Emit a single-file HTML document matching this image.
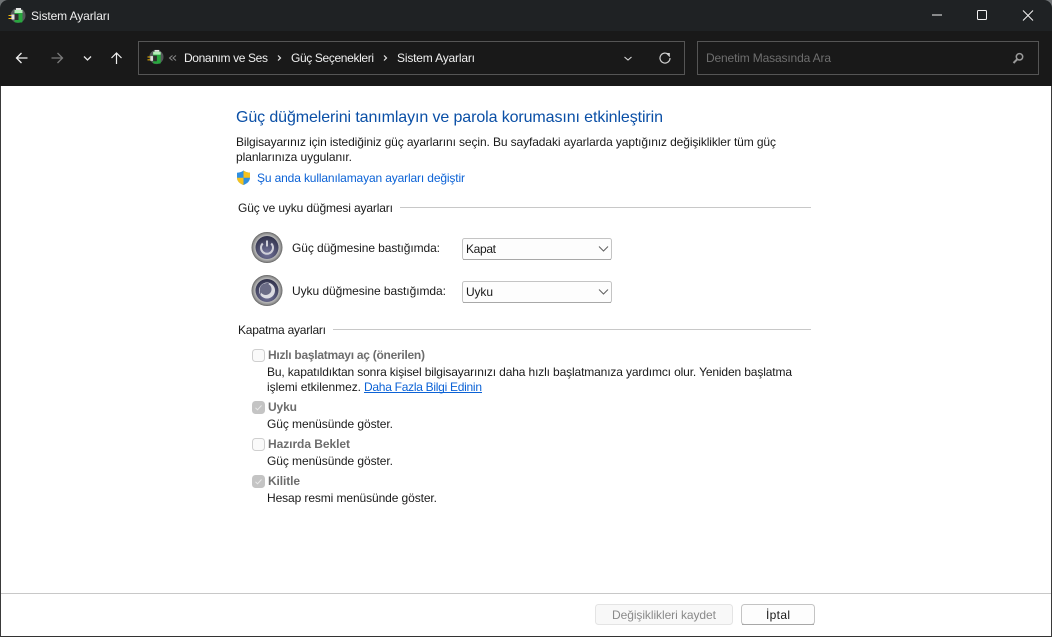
<!DOCTYPE html>
<html><head><meta charset="utf-8"><title>Sistem Ayarları</title>
<style>
html,body{margin:0;padding:0;width:1052px;height:637px;overflow:hidden;background:#6f7375}
svg{display:block}
text{font-family:"Liberation Sans",sans-serif;font-size:12px;fill:#1a1a1a}
.w{fill:#f0f0f0}
.b{font-weight:bold;fill:#6d6d6d}
</style></head><body>
<svg width="1052" height="637" viewBox="0 0 1052 637" xmlns="http://www.w3.org/2000/svg">
<defs>
<radialGradient id="ring" cx="50%" cy="50%" r="50%"><stop offset="0" stop-color="#d8d8d8"/><stop offset="0.78" stop-color="#b5b5b5"/><stop offset="0.92" stop-color="#8a8a8a"/><stop offset="1" stop-color="#5f5f5f"/></radialGradient>
<radialGradient id="disc" cx="50%" cy="75%" r="75%"><stop offset="0" stop-color="#74759c"/><stop offset="1" stop-color="#2f3049"/></radialGradient>
<symbol id="batt" viewBox="0 0 18 18">
<circle cx="10" cy="8.500" r="7.500" fill="#55595a"/>
<rect x="8" y="1" width="5" height="2" fill="#e6e6e6"/>
<rect x="6.500" y="3" width="8" height="12.500" rx="1" fill="#27a83e"/>
<rect x="6.500" y="3" width="8" height="3" fill="#b4ecb8"/>
<path d="M3.500 7.500h3v5h-3z" fill="#e0e0e0"/><path d="M6.500 7h4v6h-4z" fill="#2e2e2e"/>
<path d="M0.500 8.500h3M0.500 11.500h3" stroke="#f2b705" stroke-width="1"/>
</symbol>
<symbol id="chk" viewBox="0 0 13 13"><rect x="0.5" y="0.5" width="12" height="12" rx="3" fill="#c4c4c4" stroke="#c4c4c4"/><path d="M3.500 6.800l2 2 4-4.300" fill="none" stroke="#e9e9e9" stroke-width="1"/></symbol>
<symbol id="unchk" viewBox="0 0 13 13"><rect x="0.5" y="0.5" width="12" height="12" rx="3" fill="#fafafa" stroke="#cfcfcf"/></symbol>
</defs>

<!-- window frame -->
<path d="M0 8a8 8 0 0 1 8-8H1044a8 8 0 0 1 8 8V637H0z" fill="#1f2224"/>
<rect x="0" y="31" width="1052" height="55" fill="#191919"/>
<rect x="1" y="86" width="1050" height="550" fill="#ffffff"/>
<rect x="0" y="636" width="1052" height="1" fill="#333"/>
<rect x="0" y="86" width="1" height="551" fill="#3a3a3a"/>
<rect x="1051" y="86" width="1" height="551" fill="#3a3a3a"/>

<!-- title bar -->
<use href="#batt" x="8" y="7" width="18" height="18"/>
<text x="31" y="20" class="w" textLength="79" lengthAdjust="spacing">Sistem Ayarları</text>
<path d="M932 15h10" stroke="#f2f2f2" stroke-width="1"/>
<rect x="977.500" y="10.500" width="9" height="9" rx="1" fill="none" stroke="#f2f2f2"/>
<path d="M1023 10.500l10 10M1033 10.500l-10 10" stroke="#f2f2f2" fill="none"/>

<!-- nav -->
<path d="M16.500 58h11M21.500 53l-5 5 5 5" fill="none" stroke="#f0f0f0" stroke-width="1.300"/>
<path d="M51.500 58h11M57.500 53l5 5-5 5" fill="none" stroke="#7a7a7a" stroke-width="1.300"/>
<path d="M84 56.500l3.500 3.500 3.500-3.500" fill="none" stroke="#e8e8e8" stroke-width="1.300"/>
<path d="M116.500 64V53M111.500 58l5-5 5 5" fill="none" stroke="#f0f0f0" stroke-width="1.200"/>

<!-- address box -->
<rect x="138.500" y="41.500" width="546" height="33" fill="#191919" stroke="#555"/>
<use href="#batt" x="147" y="49" width="17" height="17"/>
<path d="M172.500 55.500l-3 2.500 3 2.500M176 55.500l-3 2.500 3 2.500" fill="none" stroke="#8a8a8a"/>
<text x="184" y="62" class="w" textLength="84" lengthAdjust="spacing">Donanım ve Ses</text>
<path d="M278 55.500l2.500 2.500-2.500 2.500" fill="none" stroke="#e8e8e8" stroke-width="1.200"/>
<text x="291" y="62" class="w" textLength="83" lengthAdjust="spacing">Güç Seçenekleri</text>
<path d="M384 55.500l2.500 2.500-2.500 2.500" fill="none" stroke="#e8e8e8" stroke-width="1.200"/>
<text x="397" y="62" class="w" textLength="78" lengthAdjust="spacing">Sistem Ayarları</text>
<path d="M624.500 57l3.500 3 3.500-3" fill="none" stroke="#d8d8d8" stroke-width="1.100"/>
<path d="M668.500 54.500a5 5 0 1 0 1.500 3.500" fill="none" stroke="#d0d0d0" stroke-width="1.200"/>
<path d="M665.500 53h4.300v4.300z" fill="#d0d0d0"/>

<!-- search box -->
<rect x="697.500" y="41.500" width="341" height="33" fill="#191919" stroke="#555"/>
<text x="706" y="62" style="fill:#6e6e6e" textLength="125" lengthAdjust="spacing">Denetim Masasında Ara</text>
<circle cx="1019.500" cy="56.800" r="3.200" fill="none" stroke="#9a9a9a" stroke-width="1.500"/>
<path d="M1017 59.500l-3.500 3.500" stroke="#9a9a9a" stroke-width="2"/>

<!-- heading -->
<text x="236" y="122" style="font-size:16px;fill:#0a4fa6" textLength="427" lengthAdjust="spacing">Güç düğmelerini tanımlayın ve parola korumasını etkinleştirin</text>
<text x="236" y="146" textLength="540" lengthAdjust="spacing">Bilgisayarınız için istediğiniz güç ayarlarını seçin. Bu sayfadaki ayarlarda yaptığınız değişiklikler tüm güç</text>
<text x="236" y="161" textLength="116" lengthAdjust="spacing">planlarınıza uygulanır.</text>

<!-- shield -->
<path d="M243.500 170.500c2 1.500 4 2 6.500 2.300v5c0 3.500-3 6-6.500 7.200-3.500-1.200-6.500-3.700-6.500-7.200v-5c2.500-.3 4.500-.8 6.500-2.300z" fill="#2f8fe0"/>
<path d="M243.500 170.500c2 1.500 4 2 6.500 2.300v5h-6.500zM243.500 177.800H237c0 3.500 3 6 6.500 7.200z" fill="#f6c21c"/>
<text x="257" y="182" style="fill:#0b62d6" textLength="208" lengthAdjust="spacing">Şu anda kullanılamayan ayarları değiştir</text>

<!-- group 1 -->
<text x="238" y="212" textLength="155" lengthAdjust="spacing">Güç ve uyku düğmesi ayarları</text>
<rect x="400" y="207" width="411" height="1" fill="#c8c8c8"/>

<circle cx="267" cy="247.500" r="15.500" fill="url(#ring)"/>
<circle cx="267" cy="247.500" r="11.500" fill="url(#disc)"/>
<path d="M262.800 243.500a6 6 0 1 0 8.400 0" fill="none" stroke="#cfcfd8" stroke-width="2"/>
<path d="M267 240.500v6" stroke="#cfcfd8" stroke-width="2"/>
<text x="292" y="252" textLength="148" lengthAdjust="spacing">Güç düğmesine bastığımda:</text>
<rect x="462.500" y="238.500" width="149" height="21" rx="2" fill="#fdfdfd" stroke="#c4c4c4"/>
<rect x="463" y="259" width="148" height="1" fill="#a8a8a8"/>
<text x="466" y="253" textLength="30" lengthAdjust="spacing">Kapat</text>
<path d="M599 246.500l4.500 4.500 4.500-4.500" fill="none" stroke="#606060"/>

<circle cx="267" cy="290.500" r="15.500" fill="url(#ring)"/>
<circle cx="267" cy="290.500" r="11.500" fill="url(#disc)"/>
<circle cx="267" cy="290.500" r="8" fill="#dcdce2"/>
<path d="M269.500 283.200a8 8 0 0 0-8.200 12.600c-.9-3-.6-5.300 1.500-7.500 2-2.200 4-3.600 6.700-5.100z" fill="#5a5b78"/>
<circle cx="265.700" cy="289.200" r="5.800" fill="#6a6b85"/>
<text x="292" y="295" textLength="154" lengthAdjust="spacing">Uyku düğmesine bastığımda:</text>
<rect x="462.500" y="281.500" width="149" height="21" rx="2" fill="#fdfdfd" stroke="#c4c4c4"/>
<rect x="463" y="302" width="148" height="1" fill="#a8a8a8"/>
<text x="466" y="296" textLength="27" lengthAdjust="spacing">Uyku</text>
<path d="M599 289.500l4.500 4.500 4.500-4.500" fill="none" stroke="#606060"/>

<!-- group 2 -->
<text x="238" y="334" textLength="88" lengthAdjust="spacing">Kapatma ayarları</text>
<rect x="333" y="329" width="478" height="1" fill="#c8c8c8"/>

<use href="#unchk" x="252" y="349" width="13" height="13"/>
<text x="268" y="359" class="b" textLength="157" lengthAdjust="spacing">Hızlı başlatmayı aç (önerilen)</text>
<text x="267" y="376" textLength="525" lengthAdjust="spacing">Bu, kapatıldıktan sonra kişisel bilgisayarınızı daha hızlı başlatmanıza yardımcı olur. Yeniden başlatma</text>
<text x="267" y="391" textLength="94" lengthAdjust="spacing">işlemi etkilenmez.</text>
<text x="364" y="391" style="fill:#0b62d6" textLength="118" lengthAdjust="spacing">Daha Fazla Bilgi Edinin</text>
<rect x="364" y="392" width="118" height="1" fill="#0b62d6"/>

<use href="#chk" x="252" y="401" width="13" height="13"/>
<text x="268" y="411" class="b" textLength="29" lengthAdjust="spacing">Uyku</text>
<text x="267" y="428" textLength="126" lengthAdjust="spacing">Güç menüsünde göster.</text>

<use href="#unchk" x="252" y="438" width="13" height="13"/>
<text x="268" y="448" class="b" textLength="82" lengthAdjust="spacing">Hazırda Beklet</text>
<text x="267" y="465" textLength="126" lengthAdjust="spacing">Güç menüsünde göster.</text>

<use href="#chk" x="252" y="475" width="13" height="13"/>
<text x="268" y="485" class="b" textLength="32" lengthAdjust="spacing">Kilitle</text>
<text x="267" y="502" textLength="170" lengthAdjust="spacing">Hesap resmi menüsünde göster.</text>

<!-- footer -->
<rect x="1" y="593" width="1050" height="1" fill="#c8c8c8"/>
<rect x="595.500" y="604.500" width="137" height="20" rx="3" fill="#f8f8f8" stroke="#e4e4e4"/>
<text x="612" y="619" style="fill:#8a8a8a" textLength="104" lengthAdjust="spacing">Değişiklikleri kaydet</text>
<rect x="741.500" y="604.500" width="73" height="20" rx="3" fill="#fdfdfd" stroke="#c4c4c4"/>
<rect x="742" y="624" width="72" height="1" fill="#a8a8a8"/>
<text x="766" y="619" textLength="24" lengthAdjust="spacing">İptal</text>
</svg>
</body></html>
